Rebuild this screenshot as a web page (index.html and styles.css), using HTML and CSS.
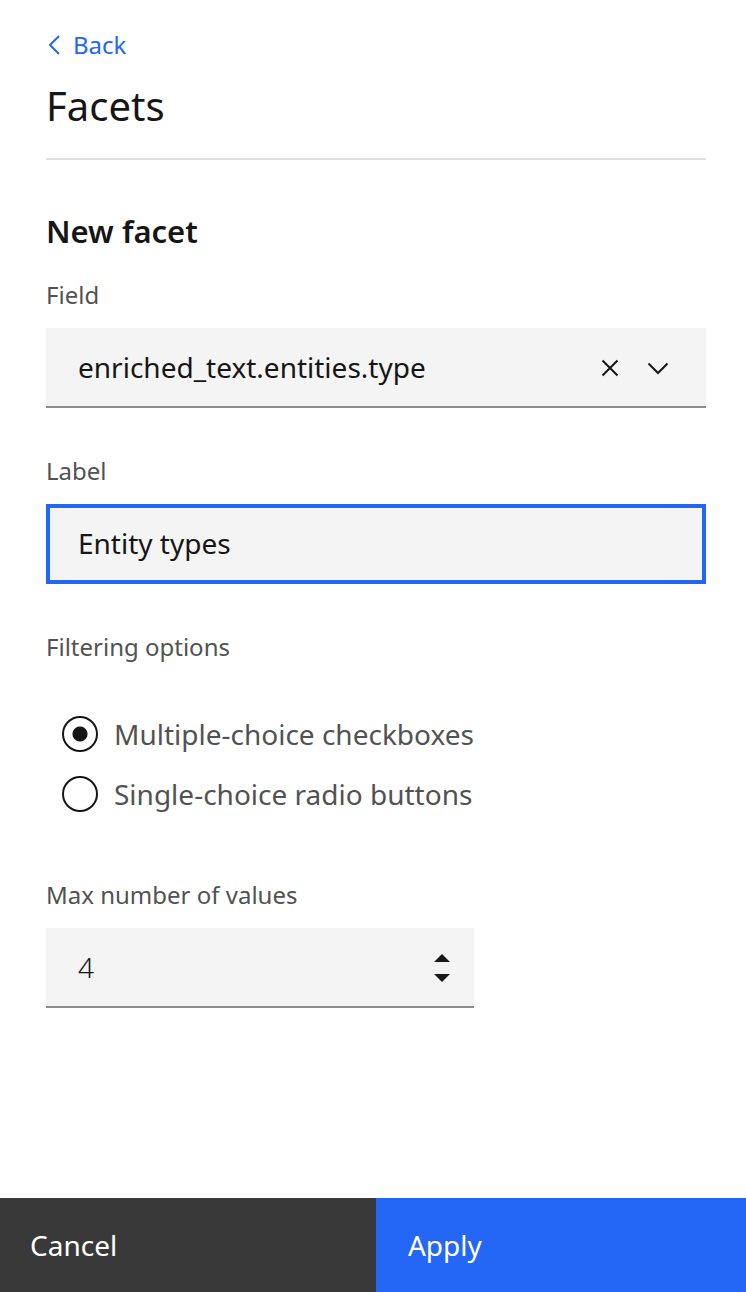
FILE: index.html
```html
<!DOCTYPE html>
<html lang="en">
<head>
<meta charset="utf-8">
<meta name="viewport" content="width=device-width, initial-scale=1">
<title>Facets</title>
<link rel="stylesheet" href="styles.css">
</head>
<body>
<form class="panel">
  <div class="content">
    <header class="header">
      <a class="back" href="#">
        <svg class="back-icon" viewBox="0 0 14 20" aria-hidden="true"><path d="M13 1 4 10l9 9"/></svg>
        Back
      </a>
      <h1 class="title">Facets</h1>
    </header>
    <h2 class="subtitle">New facet</h2>
    <div class="fields">
      <div class="field">
        <label class="label" for="field">Field</label>
        <div class="control">
          <input class="input" id="field" type="text" role="combobox" aria-expanded="false" value="enriched_text.entities.type">
          <div class="actions">
            <button class="icon-button" type="button" aria-label="Clear selection">
              <svg class="icon" viewBox="0 0 32 32" aria-hidden="true"><path d="m8.500 8.500 15 15m0-15-15 15"/></svg>
            </button>
            <button class="icon-button" type="button" aria-label="Open menu">
              <svg class="icon" viewBox="0 0 32 32" aria-hidden="true"><path d="m6.500 11.500 9.500 9.500 9.500-9.500"/></svg>
            </button>
          </div>
        </div>
      </div>
      <div class="field">
        <label class="label" for="label">Label</label>
        <div class="control control-active">
          <input class="input" id="label" type="text" value="Entity types">
        </div>
      </div>
      <fieldset class="options">
        <legend class="label">Filtering options</legend>
        <div class="choices">
          <label class="choice"><input class="radio" type="radio" name="filter" checked>Multiple-choice checkboxes</label>
          <label class="choice"><input class="radio" type="radio" name="filter">Single-choice radio buttons</label>
        </div>
      </fieldset>
      <div class="field field-number">
        <label class="label" for="max">Max number of values</label>
        <div class="control">
          <input class="input input-number" id="max" type="number" value="4">
          <div class="stepper">
            <button class="step" type="button" aria-label="Increase"><svg class="caret" viewBox="0 0 16 8" aria-hidden="true"><path d="M0 8 8 0l8 8z"/></svg></button>
            <button class="step" type="button" aria-label="Decrease"><svg class="caret" viewBox="0 0 16 8" aria-hidden="true"><path d="M0 0h16L8 8z"/></svg></button>
          </div>
        </div>
      </div>
    </div>
  </div>
  <footer class="footer">
    <button class="button cancel" type="button">Cancel</button>
    <button class="button apply" type="submit">Apply</button>
  </footer>
</form>
</body>
</html>
```
FILE: styles.css
```css
* { box-sizing: border-box; }

body {
  margin: 0;
  background: #fff;
  color: #161616;
  font-family: "Noto Sans", "Liberation Sans", sans-serif;
  font-size: 28px;
  line-height: 36px;
}

button, input {
  margin: 0;
  padding: 0;
  border: 0;
  border-radius: 0;
  background: transparent;
  color: inherit;
  font: inherit;
}

.panel { display: flex; flex-direction: column; min-height: 100vh; }
.content { flex: 1; padding: 29px 40px 48px 46px; }

.header { padding-bottom: 28px; border-bottom: 2px solid #e0e0e0; }
.back {
  display: inline-flex;
  align-items: center;
  gap: 13px;
  color: #2466f5;
  font-size: 24px;
  line-height: 32px;
  text-decoration: none;
  vertical-align: top;
}
.back-icon { width: 14px; height: 20px; fill: none; stroke: currentColor; stroke-width: 2; }
.title { margin: 17px 0 0; font-size: 40px; font-weight: 400; line-height: 48px; }
.subtitle { margin: 51px 0 28px; font-size: 31px; font-weight: 600; line-height: 40px; }

.fields { display: flex; flex-direction: column; gap: 47px; }
.field { display: flex; flex-direction: column; gap: 17px; }
.label { padding: 0; color: #525252; font-size: 24px; line-height: 32px; }

.control {
  display: flex;
  align-items: center;
  height: 80px;
  padding: 0 32px;
  background: #f4f4f4;
  box-shadow: inset 0 -2px #8d8d8d;
}
.control-active { box-shadow: inset 0 0 0 4px #2466f5; }
.input { flex: 1; min-width: 0; height: 100%; padding-bottom: 2px; outline: none; }
.actions { display: flex; gap: 16px; }
.icon-button { display: flex; }
.icon { width: 32px; height: 32px; fill: none; stroke: #161616; stroke-width: 2; }

.options { min-width: 0; margin: 0; padding: 0; border: 0; }
.choices { display: flex; flex-direction: column; gap: 24px; padding: 53px 16px 20px; }
.choice { display: flex; align-items: center; gap: 16px; color: #525252; }
.radio {
  flex: none;
  width: 36px;
  height: 36px;
  border: 2px solid #161616;
  border-radius: 50%;
  appearance: none;
}
.radio:checked { background: radial-gradient(circle, #161616 7px, transparent 8px); }

.field-number { width: 100%; max-width: 428px; }
.input-number { appearance: textfield; font-weight: 300; }
.input-number::-webkit-inner-spin-button { display: none; }
.field-number .control { padding-right: 24px; }
.stepper { display: flex; flex-direction: column; gap: 12px; }
.step { display: flex; }
.caret { width: 16px; height: 8px; fill: #161616; }

.footer { display: flex; }
.button { height: 94px; padding: 0 32px; color: #fff; text-align: left; }
.cancel { flex: 0 0 50.4%; padding-left: 30px; background: #393939; }
.apply { flex: 1; background: #2466f5; }
```
